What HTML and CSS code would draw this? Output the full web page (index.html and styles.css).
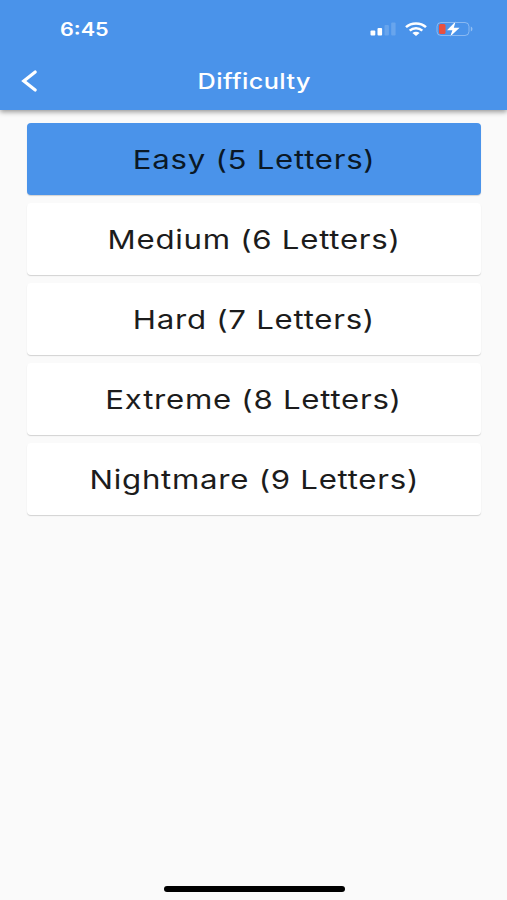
FILE: index.html
```
<!DOCTYPE html>
<html lang="en">
<head>
    <meta charset="UTF-8">
    <title>Difficulty</title>
    <link rel="stylesheet" href="styles.css">
</head>
<body>
<div id="app">
    <div id="header">
        <div class="status-bar">
            <span class="time"><span class="wide">6:45</span></span>
            <div class="status-icons">
                <svg class="signal" width="26" height="14" viewBox="0 0 26 14">
                    <rect x="0.5" y="8.5" width="4.8" height="5" rx="1" fill="#fff"/>
                    <rect x="7.5" y="6" width="4.6" height="7.5" rx="1" fill="#fff"/>
                    <rect x="14.5" y="3" width="4.4" height="10.5" rx="1" fill="#fff" opacity=".17"/>
                    <rect x="21.2" y="0.5" width="4.4" height="13" rx="1" fill="#fff" opacity=".17"/>
                </svg>
                <svg class="wifi" width="22" height="14" viewBox="0 0 22 14" fill="none" stroke="#fff" stroke-width="2.5">
                    <path d="M1 5.2C6.4 .1 15.6 .1 21 5.2"/>
                    <path d="M4.7 8.7C8.2 5.4 13.8 5.4 17.3 8.7"/>
                    <path d="M11 14L7.4 10.9C9.4 9.2 12.6 9.2 14.6 10.9Z" fill="#fff" stroke="none"/>
                </svg>
                <svg class="battery" width="37" height="16" viewBox="0 0 37 16">
                    <rect x="1" y="1.5" width="32" height="13" rx="4" fill="none" stroke="#fff" stroke-opacity=".35"/>
                    <path d="M34.8 5.5C37 6.3 37 9.7 34.8 10.5Z" fill="#fff" opacity=".4"/>
                    <rect x="3" y="3" width="6.5" height="10" rx="1.5" fill="#e8503f"/>
                    <path d="M19.6 .6L11 9.2H16.4L14.2 15.6L23.6 6.8H17.8Z" fill="#fff" stroke="#4a93ea" stroke-width="1" paint-order="stroke"/>
                </svg>
            </div>
        </div>
        <div class="nav-bar">
            <svg class="back" width="17" height="24" viewBox="0 0 17 24" fill="none" stroke="#fff" stroke-width="3.2" stroke-linecap="round">
                <path d="M14.2 3L2.8 12L14.2 21"/>
            </svg>
            <h1><span class="wide">Difficulty</span></h1>
        </div>
    </div>
    <ul id="levels">
        <li class="selected"><span class="wide">Easy (5 Letters)</span></li>
        <li><span class="wide">Medium (6 Letters)</span></li>
        <li><span class="wide">Hard (7 Letters)</span></li>
        <li><span class="wide">Extreme (8 Letters)</span></li>
        <li><span class="wide">Nightmare (9 Letters)</span></li>
    </ul>
    <div id="home-bar"></div>
</div>
</body>
</html>
```
FILE: styles.css
```
*{
    margin: 0;
    padding: 0;
    box-sizing: border-box;
}
li{
    list-style: none;
}
body{
    background: #fafafa;
    font-family: Inter, "Liberation Sans", sans-serif;
}
#app{
    display: flex;
    flex-direction: column;
    height: 900px;
}
.wide{
    display: inline-block;
    transform: scaleX(1.2);
}
#header{
    height: 110px;
    background: #4a93ea;
    color: #fff;
    box-shadow: 0 2px 5px rgba(0,0,0,.4);
}
.status-bar{
    display: flex;
    justify-content: space-between;
    align-items: center;
    height: 52px;
    padding: 6px 34px 0 60px;
}
.time{
    font-size: 18px;
    font-weight: 600;
}
.time .wide{
    transform-origin: left;
}
.status-icons{
    display: flex;
    align-items: center;
    margin-top: -1px;
}
.wifi{
    margin-left: 9px;
}
.battery{
    margin-left: 9px;
}
.nav-bar{
    display: grid;
    grid-template-columns: 40px 1fr 40px;
    align-items: center;
    height: 58px;
    padding: 0 20px 0 21px;
}
h1{
    font-size: 21px;
    font-weight: 500;
    letter-spacing: .35px;
    text-align: center;
}
#levels{
    display: flex;
    flex-direction: column;
    gap: 8px;
    padding: 13px 26px 0 27px;
}
#levels li{
    height: 72px;
    line-height: 73px;
    border-radius: 4px;
    background: #fff;
    color: #1c1c1c;
    font-size: 26px;
    letter-spacing: .6px;
    text-align: center;
    box-shadow: 0 1px 1px rgba(0,0,0,.16);
}
#levels .selected{
    background: #4a93ea;
    color: #0a1826;
}
#home-bar{
    width: 181px;
    height: 6px;
    margin: auto 163px 8px 164px;
    border-radius: 3px;
    background: #000;
}
```
